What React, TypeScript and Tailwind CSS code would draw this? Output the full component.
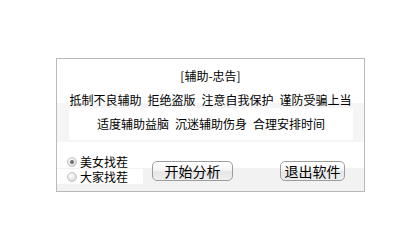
const font = { fontFamily: '"Noto Sans CJK SC", "Liberation Sans", sans-serif' };

function Radio({ checked }: { checked?: boolean }) {
  return (
    <span className="flex h-[10px] w-[10px] items-center justify-center rounded-full border border-[#c4c4c4] bg-[radial-gradient(circle_at_40%_35%,#ffffff,#e4e4e4_55%,#c9c9c9)]">
      {checked && <span className="h-[4px] w-[4px] rounded-full bg-[#6e6e6e]" />}
    </span>
  );
}

function Btn({ label, w }: { label: string; w: string }) {
  return (
    <button
      className={`${w} h-[20px] rounded-[5px] border border-[#9d9d9d] bg-[linear-gradient(to_bottom,#ffffff,#f6f6f6_45%,#e6e6e6_55%,#efefef)] text-[14px] leading-[18px] text-black`}
    >
      {label}
    </button>
  );
}

export default function App() {
  const line2 = ["抵制不良辅助", "拒绝盗版", "注意自我保护", "谨防受骗上当"];
  const line3 = ["适度辅助益脑", "沉迷辅助伤身", "合理安排时间"];

  return (
    <div className="h-[246px] w-[420px] bg-white pl-[56px] pt-[58px] text-[12px] text-black" style={font}>
      <div className="w-[309px] border border-[#b9b9b9]">
        {/* advice text */}
        <div className="h-[83px] border-b border-[#b9b9b9]">
          <div className="h-[44px] bg-white pt-[11px]">
            <div className="text-center leading-[12px]">[辅助-忠告]</div>
            <div className="mt-[12px] flex justify-center gap-[6px] leading-[12px]">
              {line2.map((t) => (
                <span key={t}>{t}</span>
              ))}
            </div>
          </div>
          <div className="h-[39px] bg-[#f5f5f5] pl-[12px] pt-[5px]">
            <div className="flex h-[32px] w-[284px] items-center justify-center gap-[6px] bg-white leading-[12px]">
              {line3.map((t) => (
                <span key={t}>{t}</span>
              ))}
            </div>
          </div>
        </div>

        {/* options + buttons */}
        <div className="flex h-[49px] bg-[linear-gradient(to_bottom,#ffffff_26px,#f2f2f2_26px)]">
          <div className="w-[95px] pt-[12px]">
            <div className="flex h-[15px] items-center gap-[3px] pl-[10px]">
              <Radio checked />
              <span className="block h-[15px] leading-[15px]">美女找茬</span>
            </div>
            <div className="flex h-[15px] w-[86px] items-center gap-[3px] bg-white pl-[10px]">
              <Radio />
              <span className="block h-[15px] leading-[15px]">大家找茬</span>
            </div>
          </div>
          <div className="mt-[19px] flex items-start">
            <Btn label="开始分析" w="w-[81px]" />
            <div className="ml-[47px]">
              <Btn label="退出软件" w="w-[65px]" />
            </div>
          </div>
        </div>
      </div>
    </div>
  );
}
